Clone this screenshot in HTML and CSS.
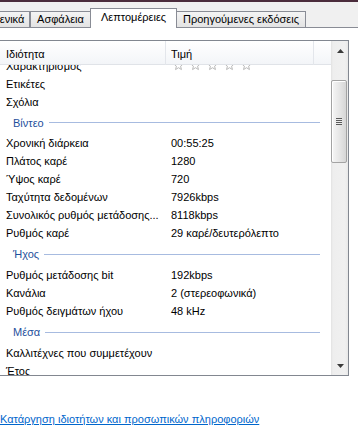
FILE: index.html
```html
<!DOCTYPE html>
<html lang="el">
<head>
<meta charset="utf-8">
<title>Λεπτομέρειες</title>
<link rel="stylesheet" href="styles.css">
</head>
<body>
<div class="frame-top"></div>
<div class="tabstrip">
  <div class="tab tab--first">Γενικά</div>
  <div class="tab tab--sec">Ασφάλεια</div>
  <div class="tab tab--active">Λεπτομέρειες</div>
  <div class="tab tab--prev">Προηγούμενες εκδόσεις</div>
</div>
<div class="page">
  <div class="listview">
    <div class="lv-main">
      <div class="lv-header">
        <div class="hcell hcell--name">Ιδιότητα</div>
        <div class="hcell hcell--value">Τιμή</div>
        <div class="hcell hcell--fill"></div>
      </div>
      <div class="lv-body">
        <div class="lv-content">
          <div class="row"><span class="c-name">Χαρακτηρισμός</span><span class="c-value">
            <svg class="stars" width="90" height="12" viewBox="0 0 90 12">
              <g fill="none" stroke="#b9b9b9" stroke-width="1">
                <polygon transform="translate(0.5 0.5)" points="5,0 6.29,3.22 9.76,3.45 7.09,5.68 7.94,9.05 5,7.2 2.06,9.05 2.91,5.68 0.24,3.45 3.71,3.22"/>
                <polygon transform="translate(17.5 0.5)" points="5,0 6.29,3.22 9.76,3.45 7.09,5.68 7.94,9.05 5,7.2 2.06,9.05 2.91,5.68 0.24,3.45 3.71,3.22"/>
                <polygon transform="translate(34.5 0.5)" points="5,0 6.29,3.22 9.76,3.45 7.09,5.68 7.94,9.05 5,7.2 2.06,9.05 2.91,5.68 0.24,3.45 3.71,3.22"/>
                <polygon transform="translate(51.5 0.5)" points="5,0 6.29,3.22 9.76,3.45 7.09,5.68 7.94,9.05 5,7.2 2.06,9.05 2.91,5.68 0.24,3.45 3.71,3.22"/>
                <polygon transform="translate(68.5 0.5)" points="5,0 6.29,3.22 9.76,3.45 7.09,5.68 7.94,9.05 5,7.2 2.06,9.05 2.91,5.68 0.24,3.45 3.71,3.22"/>
              </g>
            </svg></span></div>
          <div class="row"><span class="c-name">Ετικέτες</span><span class="c-value"></span></div>
          <div class="row"><span class="c-name">Σχόλια</span><span class="c-value"></span></div>
          <div class="group group--first"><span class="group-title">Βίντεο</span><span class="group-line"></span></div>
          <div class="row"><span class="c-name">Χρονική διάρκεια</span><span class="c-value">00:55:25</span></div>
          <div class="row"><span class="c-name">Πλάτος καρέ</span><span class="c-value">1280</span></div>
          <div class="row"><span class="c-name">Ύψος καρέ</span><span class="c-value">720</span></div>
          <div class="row"><span class="c-name">Ταχύτητα δεδομένων</span><span class="c-value">7926kbps</span></div>
          <div class="row"><span class="c-name">Συνολικός ρυθμός μετάδοσης...</span><span class="c-value">8118kbps</span></div>
          <div class="row"><span class="c-name">Ρυθμός καρέ</span><span class="c-value">29 καρέ/δευτερόλεπτο</span></div>
          <div class="group"><span class="group-title">Ήχος</span><span class="group-line"></span></div>
          <div class="row"><span class="c-name">Ρυθμός μετάδοσης bit</span><span class="c-value">192kbps</span></div>
          <div class="row"><span class="c-name">Κανάλια</span><span class="c-value">2 (στερεοφωνικά)</span></div>
          <div class="row"><span class="c-name">Ρυθμός δειγμάτων ήχου</span><span class="c-value">48 kHz</span></div>
          <div class="group"><span class="group-title">Μέσα</span><span class="group-line"></span></div>
          <div class="row"><span class="c-name">Καλλιτέχνες που συμμετέχουν</span><span class="c-value"></span></div>
          <div class="row"><span class="c-name">Έτος</span><span class="c-value"></span></div>
        </div>
      </div>
    </div>
    <div class="scrollbar">
      <div class="sb-btn sb-btn--up">
        <svg width="7" height="4" viewBox="0 0 7 4"><polygon points="0,4 3.5,0 7,4" fill="#3a3a3a"/></svg>
      </div>
      <div class="sb-track">
        <div class="sb-thumb">
          <div class="sb-grip"></div>
        </div>
      </div>
      <div class="sb-btn sb-btn--down">
        <svg width="7" height="4" viewBox="0 0 7 4"><polygon points="0,0 7,0 3.5,4" fill="#3a3a3a"/></svg>
      </div>
    </div>
  </div>
  <div class="links"><a class="link" href="#">Κατάργηση ιδιοτήτων και προσωπικών πληροφοριών</a></div>
</div>
</body>
</html>
```
FILE: styles.css
```css
* { box-sizing: border-box; }

body {
  margin: 0;
  width: 358px;
  height: 437px;
  overflow: hidden;
  background: #ffffff;
  font-family: "Liberation Sans", Arial, sans-serif;
  font-size: 11px;
  color: #000;
}

.frame-top {
  height: 2px;
  background: #4b2c3c;
}

.tabstrip {
  height: 25px;
  background: #f0f0f0;
  display: flex;
  align-items: flex-end;
  white-space: nowrap;
}

.tab {
  height: 16px;
  border: 1px solid #898c95;
  border-bottom: none;
  background: linear-gradient(#f4f4f4, #e3e3e3);
  line-height: 15px;
  text-align: center;
  overflow: hidden;
}

.tab--first { width: 42px; margin-left: -12px; }
.tab--sec { width: 61px; margin-left: 0; }
.tab--active {
  width: 87px;
  height: 20px;
  margin-left: -1px;
  margin-bottom: -1px;
  background: #ffffff;
  position: relative;
  z-index: 2;
  line-height: 17px;
}
.tab--prev { width: 130px; margin-left: -1px; }

.page {
  border-top: 1px solid #898c95;
  background: #ffffff;
  padding-top: 12px;
}

.listview {
  margin-left: -1px;
  width: 350px;
  height: 336px;
  border: 1px solid #828790;
  display: flex;
}

.lv-main {
  flex: 1;
  display: flex;
  flex-direction: column;
  overflow: hidden;
}

.lv-header {
  height: 24px;
  flex: none;
  display: grid;
  grid-template-columns: 166px 148px 1fr;
  border-bottom: 1px solid #e0e3e8;
  background: linear-gradient(#ffffff, #f3f5f8);
}

.hcell {
  line-height: 22px;
  padding-top: 2px;
  white-space: nowrap;
}
.hcell--name { padding-left: 6px; border-right: 1px solid #e3e6eb; }
.hcell--value { padding-left: 5px; border-right: 1px solid #e3e6eb; }

.lv-body {
  flex: 1;
  overflow: hidden;
}

.lv-content {
  margin-top: -8px;
}

.row {
  display: grid;
  grid-template-columns: 166px 1fr;
  height: 18px;
  line-height: 18px;
  white-space: nowrap;
}

.c-name {
  padding-left: 6px;
  overflow: hidden;
}
.c-value {
  padding-left: 5px;
  overflow: hidden;
}

.stars {
  display: block;
  margin: 3px 0 0 2px;
}

.group {
  height: 24px;
  display: flex;
  align-items: center;
  padding-left: 13px;
}
.group--first { height: 23px; }

.group-title {
  color: #1e4f9c;
  line-height: 18px;
}

.group-line {
  flex: 1;
  height: 1px;
  margin-left: 5px;
  margin-right: 11px;
  background: #a7bbe0;
}

.scrollbar {
  width: 17px;
  flex: none;
  display: flex;
  flex-direction: column;
  background: linear-gradient(to right, #e2e2e2, #eeeeee 2px, #f0f0f0 14px, #e8e8e8);
}

.sb-btn {
  height: 17px;
  flex: none;
  display: flex;
  align-items: center;
  justify-content: center;
}
.sb-btn svg { display: block; margin-left: 1px; }
.sb-btn--up svg { margin-top: 3px; }
.sb-btn--down svg { margin-top: -1px; }

.sb-track {
  flex: 1;
}

.sb-thumb {
  margin: 22px 1px 0 0;
  height: 83px;
  border: 1px solid #a3a3a3;
  border-radius: 2px;
  background: linear-gradient(to right, #f6f6f6, #e7e7e7 50%, #d6d6d6);
  box-shadow: inset 1px 1px 0 #ffffff;
  display: flex;
  align-items: center;
  justify-content: center;
}

.sb-grip {
  width: 6px;
  height: 7px;
  background: repeating-linear-gradient(#5a5a5a 0 1px, #ececec 1px 2px);
}

.links {
  margin-top: 35px;
  line-height: 16px;
  white-space: nowrap;
}

.link {
  color: #0066cc;
  text-decoration: underline;
}
```
